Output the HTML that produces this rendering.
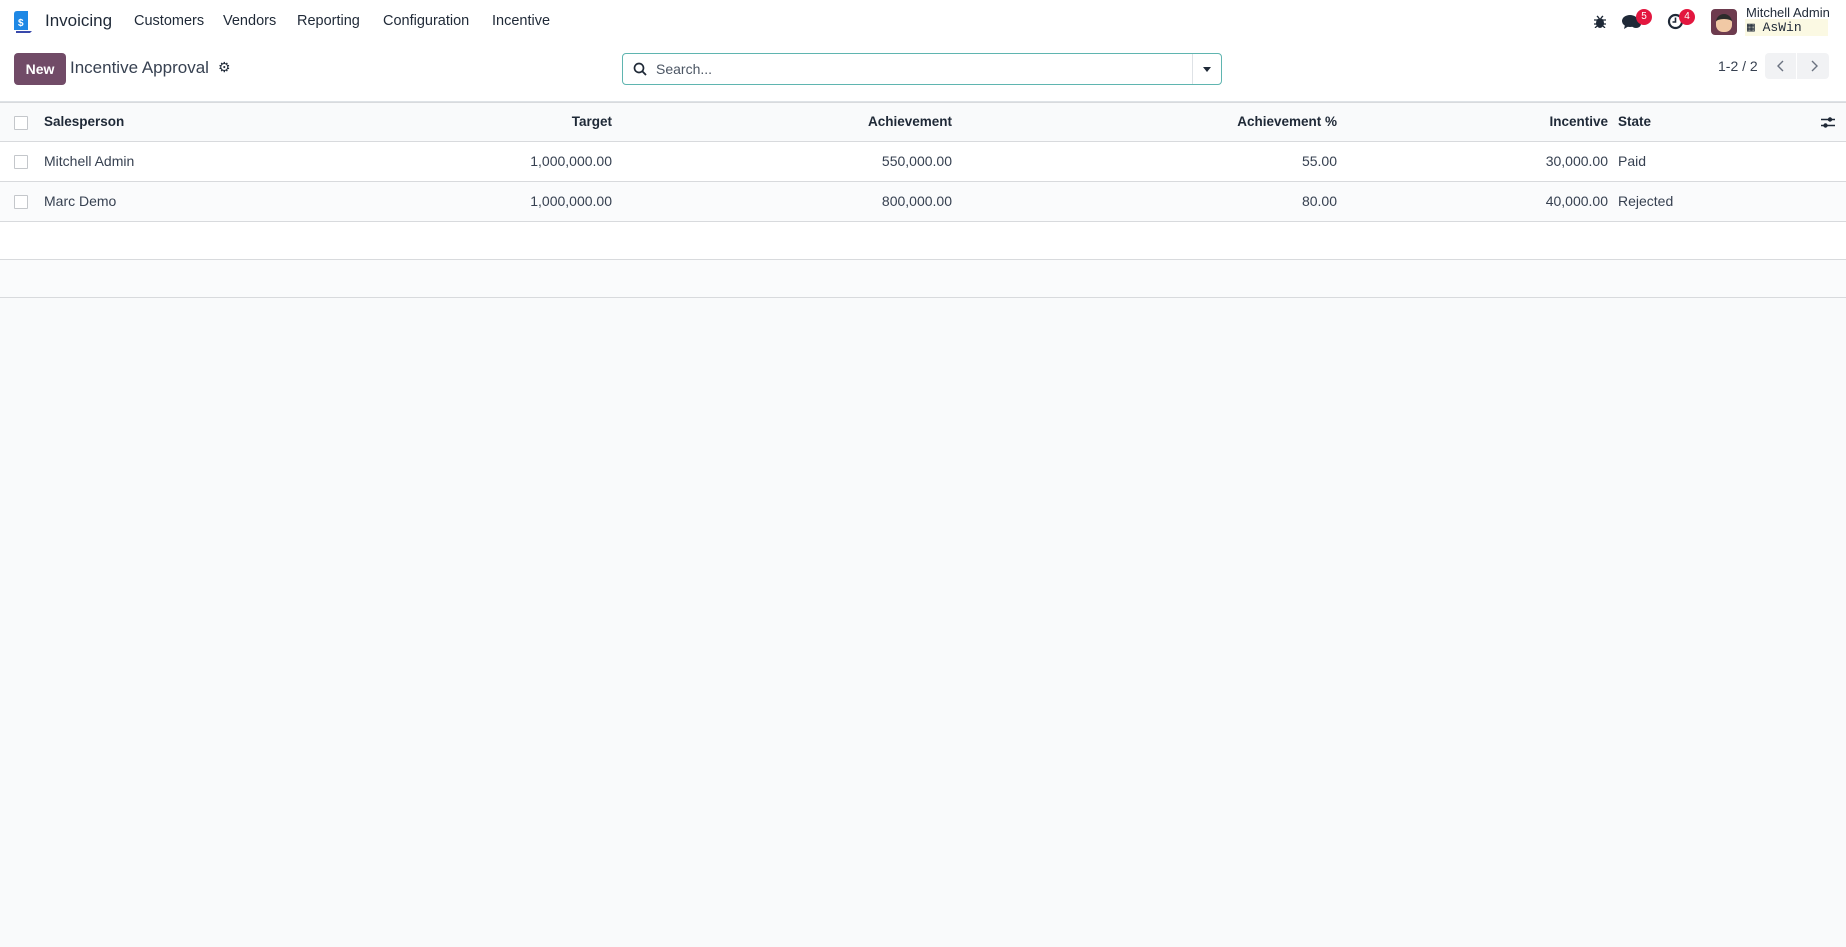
<!DOCTYPE html>
<html><head><meta charset="utf-8"><style>
*{box-sizing:border-box;margin:0;padding:0}
body{width:1846px;height:947px;background:#f9fafb;font-family:"Liberation Sans",sans-serif;color:#374151;font-size:14px;position:relative;overflow:hidden}
.nav{position:absolute;top:0;left:0;width:1846px;height:44px;background:#fff}
.abs{position:absolute}
.cp{position:absolute;top:44px;left:0;width:1846px;height:58px;background:#fff;border-bottom:1px solid #dee2e6}
.tbl{position:absolute;top:102px;left:0;width:1846px}
.row{position:relative;height:40px;border-bottom:1px solid #d8dadd;background:#fff}
.row span{position:absolute;top:11px;white-space:nowrap}
.cb{position:absolute;left:14px;top:13px;width:14px;height:14px;border:1px solid #c4c7cb;background:#fff;border-radius:1px}
.hd{background:#f9fafb;font-weight:bold;color:#1f2937;border-top:1px solid #d8dadd;font-size:13.5px}
.badge{position:absolute;width:16px;height:16px;border-radius:8px;background:#e3173f;color:#fff;font-size:10px;text-align:center;line-height:16px}
</style></head><body>
<div class="nav">
 <svg class="abs" style="left:12px;top:10px" width="22" height="24" viewBox="0 0 22 24"><path d="M2 4 Q2 1 5 1 L16 1 L16 20 L2 20Z" fill="#1e88e5"/><path d="M4 21 L20 21 L18 23 L4 23Z" fill="#3949ab"/><text x="6" y="16" font-size="10" font-weight="bold" fill="#fff" font-family="Liberation Sans">$</text></svg>
 <span class="abs" style="left:45px;top:11px;font-size:17px;color:#1f2937">Invoicing</span>
 <span class="abs" style="left:134px;top:13px;font-size:14.5px;color:#1f2937">Customers</span>
 <span class="abs" style="left:223px;top:13px;font-size:14.5px;color:#1f2937">Vendors</span>
 <span class="abs" style="left:297px;top:13px;font-size:14.5px;color:#1f2937">Reporting</span>
 <span class="abs" style="left:383px;top:13px;font-size:14.5px;color:#1f2937">Configuration</span>
 <span class="abs" style="left:492px;top:13px;font-size:14.5px;color:#1f2937">Incentive</span>
 <svg class="abs" style="left:1594px;top:15px" width="12" height="13" viewBox="0 0 12 13"><ellipse cx="6" cy="8" rx="4" ry="5" fill="#1f2937"/><path d="M0 5h12M0 9h12M1 13l2-2M11 13l-2-2M3 1l2 2M9 1l-2 2" stroke="#1f2937" stroke-width="1.3"/></svg>
 <svg class="abs" style="left:1622px;top:14px" width="20" height="16" viewBox="0 0 20 16"><ellipse cx="8" cy="7" rx="8" ry="6" fill="#1f2937"/><path d="M3 11 L2 15 L7 12Z" fill="#1f2937"/><ellipse cx="14" cy="10" rx="5" ry="4" fill="#1f2937"/></svg>
 <div class="badge" style="left:1636px;top:9px">5</div>
 <svg class="abs" style="left:1667px;top:13px" width="17" height="17" viewBox="0 0 17 17"><circle cx="8.5" cy="8.5" r="6.5" fill="none" stroke="#1f2937" stroke-width="2.2"/><path d="M8.5 4.5v4.5h-3" stroke="#1f2937" stroke-width="1.6" fill="none"/></svg>
 <div class="badge" style="left:1679px;top:9px">4</div>
 <div class="abs" style="left:1711px;top:9px;width:26px;height:26px;border-radius:4px;background:#6d3b4e"><div style="margin:5px auto;width:16px;height:18px;border-radius:8px 8px 7px 7px;background:#f1c9a5;border-top:5px solid #2b2b2b"></div></div>
 <span class="abs" style="left:1746px;top:5px;font-size:13px;color:#1f2937">Mitchell Admin</span>
 <div class="abs" style="left:1745px;top:19px;width:83px;height:17px;background:#fbf9e3"></div>
 <span class="abs" style="left:1747px;top:20px;font-size:13px;color:#1f2937;font-family:'Liberation Mono',monospace">&#9638; AsWin</span>
</div>
<div class="cp">
 <div class="abs" style="left:14px;top:9px;width:52px;height:32px;background:#714b67;border-radius:4px;color:#fff;font-weight:bold;font-size:14px;text-align:center;line-height:32px">New</div>
 <span class="abs" style="left:70px;top:14px;font-size:17px;color:#374151">Incentive Approval</span>
 <span class="abs" style="left:218px;top:15px;font-size:14px;color:#1f2937">&#9881;</span>
 <div class="abs" style="left:622px;top:9px;width:600px;height:32px;border:1px solid #5fb5b0;border-radius:4px;background:#fff">
  <svg class="abs" style="left:10px;top:8px" width="14" height="14" viewBox="0 0 14 14"><circle cx="6" cy="6" r="4.5" fill="none" stroke="#1f2937" stroke-width="1.7"/><path d="M9.3 9.3L13 13" stroke="#1f2937" stroke-width="1.8"/></svg>
  <span class="abs" style="left:33px;top:7px;color:#4b5563">Search...</span>
  <div class="abs" style="left:569px;top:0;width:1px;height:30px;background:#dee2e6"></div>
  <div class="abs" style="left:580px;top:13px;width:0;height:0;border-left:4px solid transparent;border-right:4px solid transparent;border-top:5px solid #1f2937"></div>
 </div>
 <span class="abs" style="left:1718px;top:14px;color:#374151">1-2 / 2</span>
 <div class="abs" style="left:1765px;top:9px;width:64px;height:26px;background:#f1f2f4;border-radius:4px"><div style="position:absolute;left:31px;top:0;width:1px;height:26px;background:#fff"></div>
  <svg class="abs" style="left:11px;top:7px" width="10" height="12"><path d="M7 1L2 6l5 5" stroke="#6b7280" fill="none" stroke-width="1.4"/></svg>
  <svg class="abs" style="left:44px;top:7px" width="10" height="12"><path d="M3 1l5 5-5 5" stroke="#6b7280" fill="none" stroke-width="1.4"/></svg>
 </div>
</div>
<div class="tbl">
 <div class="row hd"><div class="cb"></div><span style="left:44px">Salesperson</span><span style="right:1234px">Target</span><span style="right:894px">Achievement</span><span style="right:509px">Achievement %</span><span style="right:238px">Incentive</span><span style="left:1618px">State</span>
  <svg class="abs" style="left:1821px;top:13px" width="14" height="13"><path d="M0 3.5h14M0 9.5h14" stroke="#1f2937" stroke-width="1.6"/><circle cx="9" cy="3.5" r="2.2" fill="#1f2937"/><circle cx="4.5" cy="9.5" r="2.2" fill="#1f2937"/></svg></div>
 <div class="row"><div class="cb"></div><span style="left:44px">Mitchell Admin</span><span style="right:1234px">1,000,000.00</span><span style="right:894px">550,000.00</span><span style="right:509px">55.00</span><span style="right:238px">30,000.00</span><span style="left:1618px">Paid</span></div>
 <div class="row" style="background:#fafbfc"><div class="cb"></div><span style="left:44px">Marc Demo</span><span style="right:1234px">1,000,000.00</span><span style="right:894px">800,000.00</span><span style="right:509px">80.00</span><span style="right:238px">40,000.00</span><span style="left:1618px">Rejected</span></div>
 <div class="row" style="height:38px"></div>
 <div class="row" style="height:38px;background:#fafbfc"></div>
</div>
</body></html>
